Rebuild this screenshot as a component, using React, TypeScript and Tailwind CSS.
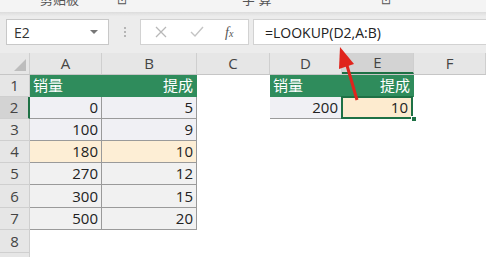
import React from 'react';

const cols = [
  { key: 'A', w: 72 },
  { key: 'B', w: 95 },
  { key: 'C', w: 73 },
  { key: 'D', w: 72 },
  { key: 'E', w: 72 },
  { key: 'F', w: 72 },
];

const rowHeights = [22, 22, 22, 22, 22, 23, 22, 23, 22];

const data: Record<string, string>[] = [
  { A: '销量', B: '提成', D: '销量', E: '提成' },
  { A: '0', B: '5', D: '200', E: '10' },
  { A: '100', B: '9' },
  { A: '180', B: '10' },
  { A: '270', B: '12' },
  { A: '300', B: '15' },
  { A: '500', B: '20' },
  {},
  {},
];

function cellClass(r: number, c: string) {
  // r is 1-based row number
  const inLeft = (c === 'A' || c === 'B') && r <= 7;
  const inRight = (c === 'D' || c === 'E') && r <= 2;
  if (r === 1 && (inLeft || inRight)) {
    return 'bg-[#2f8c5c] text-white border-r border-b border-[#2f8c5c]';
  }
  if (c === 'E' && r === 2) {
    return 'bg-[#fdebcf] text-[#222] border-2 border-[#1e7145] -ml-px -mt-px';
  }
  if (inLeft || inRight) {
    const bg = r === 4 ? 'bg-[#fdeed5]' : r <= 3 ? 'bg-[#f0f0f4]' : 'bg-[#f1f1f1]';
    return `${bg} text-[#222] border-r border-b border-[#9a9a9a]`;
  }
  return 'bg-white';
}

export default function App() {
  return (
    <div
      className="relative w-[486px] h-[257px] overflow-hidden bg-white"
      style={{ fontFamily: '"Open Sans", "Noto Sans CJK SC", sans-serif' }}
    >
      {/* ribbon remnant, cut at the top like the capture */}
      <div className="h-[12px] bg-[#f4f4f4] overflow-hidden relative">
        <div className="flex items-end h-[12px] text-[13px] leading-none text-[#555] -mt-[6px]">
          <span className="ml-[40px]">剪贴板</span>
          <span className="ml-[38px] text-[12px]">⊡</span>
          <span className="ml-[115px]">字 算</span>
          <span className="ml-[110px] text-[12px]">⊡</span>
        </div>
      </div>
      <div className="h-[4px] bg-gradient-to-b from-[#dcdcdc] to-[#ebebeb]" />

      {/* formula bar */}
      <div className="h-[35px] bg-[#ececec] flex items-start pt-[3px]">
        <div className="ml-[6px] w-[103px] h-[26px] bg-white border border-[#c8c8c8] flex items-center px-[7px]">
          <span className="text-[14px] text-[#333] flex-1">E2</span>
          <span className="w-0 h-0 border-l-[4px] border-r-[4px] border-t-[4px] border-l-transparent border-r-transparent border-t-[#777] mr-[3px]" />
        </div>
        <div className="w-[31px] h-[26px] flex flex-col items-center justify-center gap-[2px]">
          <span className="w-[2px] h-[2px] bg-[#b5b5b5]" />
          <span className="w-[2px] h-[2px] bg-[#b5b5b5]" />
          <span className="w-[2px] h-[2px] bg-[#b5b5b5]" />
        </div>
        <div className="w-[109px] h-[26px] bg-white border border-[#d2d2d2] flex items-center">
          <svg width="12" height="12" viewBox="0 0 12 12" className="ml-[14px]">
            <path d="M1 1 L11 11 M11 1 L1 11" stroke="#b8b8b8" strokeWidth="1.3" />
          </svg>
          <svg width="14" height="12" viewBox="0 0 14 12" className="ml-[23px]">
            <path d="M1 6 L5 10 L13 1" stroke="#c4c4c4" strokeWidth="1.4" fill="none" />
          </svg>
          <span className="ml-[21px] text-[14px] italic text-[#555]" style={{ fontFamily: '"Liberation Serif", serif' }}>
            f<span className="text-[10px]">x</span>
          </span>
        </div>
        <div className="ml-[4px] flex-1 h-[26px] bg-white border border-[#d2d2d2] border-r-0 flex items-center pl-[11px]">
          <span className="text-[14px] text-[#222]">=LOOKUP(D2,A:B)</span>
        </div>
      </div>

      {/* sheet */}
      <div className="bg-[#ececec] h-[2px]" />
      <div className="flex flex-col">
        {/* column headers */}
        <div className="flex h-[22px] bg-[#e6e6e6] border-b border-[#c6c6c6]">
          <div className="w-[30px] relative border-r border-[#cfcfcf]">
            <div className="absolute right-[3px] bottom-[3px] w-0 h-0" style={{ borderBottom: '12px solid #bdbdbd', borderLeft: '12px solid transparent' }} />
          </div>
          {cols.map(c => (
            <div
              key={c.key}
              style={{ width: c.w }}
              className={`flex items-center justify-center text-[15px] text-[#444] border-r border-[#cfcfcf] ${c.key === 'E' ? 'bg-[#d3d3d3] border-b-2 border-b-[#1e7145]' : ''}`}
            >
              {c.key}
            </div>
          ))}
        </div>
        {rowHeights.map((h, i) => {
          const r = i + 1;
          return (
            <div key={r} className="flex" style={{ height: h }}>
              <div
                className={`w-[30px] shrink-0 flex items-center justify-center text-[15px] text-[#444] border-b border-r border-[#cfcfcf] ${r === 2 ? 'bg-[#d3d3d3] border-r-2 border-r-[#1e7145]' : 'bg-[#e6e6e6]'}`}
              >
                {r}
              </div>
              {cols.map(c => {
                const v = data[i][c.key];
                const isText = r === 1 && v;
                return (
                  <div
                    key={c.key}
                    style={{ width: c.w }}
                    className={`shrink-0 flex items-center text-[15px] px-[3px] ${isText && (c.key === 'A' || c.key === 'D') ? 'justify-start' : 'justify-end'} ${cellClass(r, c.key)}`}
                  >
                    {v}
                  </div>
                );
              })}
            </div>
          );
        })}
      </div>

      {/* fill handle */}
      <div className="absolute left-[411px] top-[116px] w-[6px] h-[6px] bg-[#1e7145] border border-white" />

      {/* red arrow */}
      <svg className="absolute left-0 top-0" width="486" height="257">
        <line x1="357" y1="100" x2="346" y2="62" stroke="#e0241c" strokeWidth="3" />
        <polygon points="340,47 339,69 354,64" fill="#e0241c" />
      </svg>
    </div>
  );
}
